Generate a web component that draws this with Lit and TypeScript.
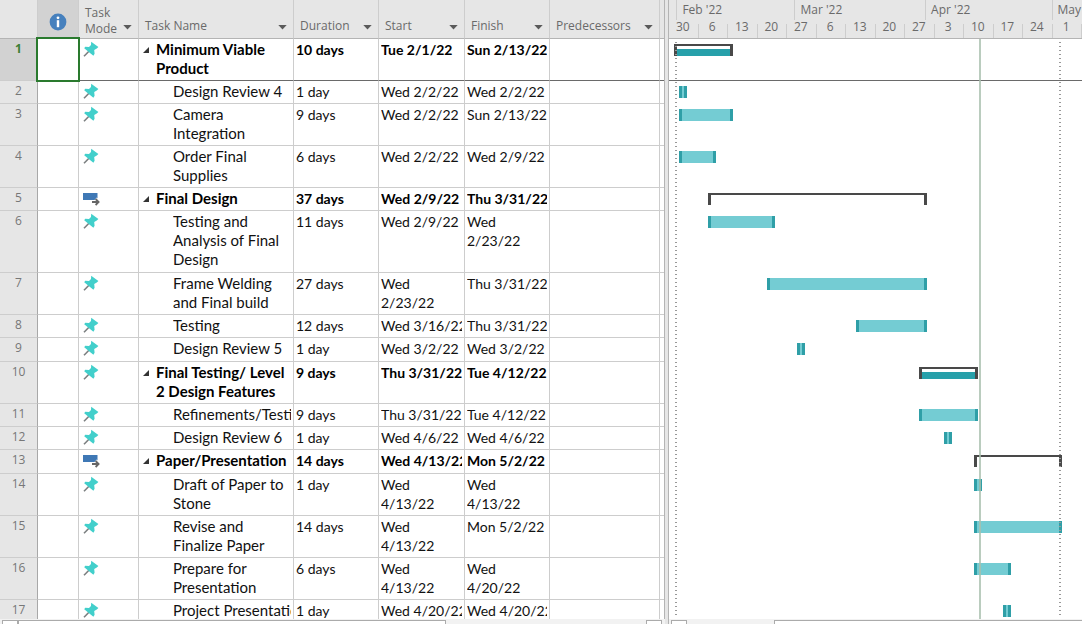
import { LitElement, html, css, svg } from "lit";
import { customElement } from "lit/decorators.js";
import { classMap } from "lit/directives/class-map.js";
import { styleMap } from "lit/directives/style-map.js";

interface Task {
  id: number;
  name: string;
  duration: string;
  start: string;
  finish: string;
  /** Day offsets from the first day of the timeline, end exclusive. */
  from: number;
  to: number;
  height: number;
  summary?: "manual" | "auto";
}

const DAYS = 98;
const TODAY = 74;
const PROJECT_START = 2;
const PROJECT_END = 93;

const TASKS: Task[] = [
  { id: 1, name: "Minimum Viable\nProduct", duration: "10 days", start: "Tue 2/1/22", finish: "Sun 2/13/22", from: 2, to: 15, height: 42, summary: "manual" },
  { id: 2, name: "Design Review 4", duration: "1 day", start: "Wed 2/2/22", finish: "Wed 2/2/22", from: 3, to: 4, height: 23 },
  { id: 3, name: "Camera\nIntegration", duration: "9 days", start: "Wed 2/2/22", finish: "Sun 2/13/22", from: 3, to: 15, height: 42 },
  { id: 4, name: "Order Final\nSupplies", duration: "6 days", start: "Wed 2/2/22", finish: "Wed 2/9/22", from: 3, to: 11, height: 42 },
  { id: 5, name: "Final Design", duration: "37 days", start: "Wed 2/9/22", finish: "Thu 3/31/22", from: 10, to: 61, height: 23, summary: "auto" },
  { id: 6, name: "Testing and\nAnalysis of Final\nDesign", duration: "11 days", start: "Wed 2/9/22", finish: "Wed\n2/23/22", from: 10, to: 25, height: 62 },
  { id: 7, name: "Frame Welding\nand Final build", duration: "27 days", start: "Wed\n2/23/22", finish: "Thu 3/31/22", from: 24, to: 61, height: 42 },
  { id: 8, name: "Testing", duration: "12 days", start: "Wed 3/16/22", finish: "Thu 3/31/22", from: 45, to: 61, height: 23 },
  { id: 9, name: "Design Review 5", duration: "1 day", start: "Wed 3/2/22", finish: "Wed 3/2/22", from: 31, to: 32, height: 24 },
  { id: 10, name: "Final Testing/ Level\n2 Design Features", duration: "9 days", start: "Thu 3/31/22", finish: "Tue 4/12/22", from: 60, to: 73, height: 42, summary: "manual" },
  { id: 11, name: "Refinements/Testing", duration: "9 days", start: "Thu 3/31/22", finish: "Tue 4/12/22", from: 60, to: 73, height: 23 },
  { id: 12, name: "Design Review 6", duration: "1 day", start: "Wed 4/6/22", finish: "Wed 4/6/22", from: 66, to: 67, height: 23 },
  { id: 13, name: "Paper/Presentation", duration: "14 days", start: "Wed 4/13/22", finish: "Mon 5/2/22", from: 73, to: 93, height: 24, summary: "auto" },
  { id: 14, name: "Draft of Paper to\nStone", duration: "1 day", start: "Wed\n4/13/22", finish: "Wed\n4/13/22", from: 73, to: 74, height: 42 },
  { id: 15, name: "Revise and\nFinalize Paper", duration: "14 days", start: "Wed\n4/13/22", finish: "Mon 5/2/22", from: 73, to: 93, height: 42 },
  { id: 16, name: "Prepare for\nPresentation", duration: "6 days", start: "Wed\n4/13/22", finish: "Wed\n4/20/22", from: 73, to: 81, height: 42 },
  { id: 17, name: "Project Presentation", duration: "1 day", start: "Wed 4/20/22", finish: "Wed 4/20/22", from: 80, to: 81, height: 23 },
];

const MONTHS = [
  { label: "Feb '22", day: 2 },
  { label: "Mar '22", day: 30 },
  { label: "Apr '22", day: 61 },
  { label: "May '22", day: 91 },
];

const WEEKS = [30, 6, 13, 20, 27, 6, 13, 20, 27, 3, 10, 17, 24, 1];

const percent = (day: number) => `${(day / DAYS) * 100}%`;

const pinIcon = html`<svg class="icon" width="16" height="16" viewBox="0 0 16 16" role="img" aria-label="Manually scheduled">
  ${svg`<path d="M1 15.2 L6.2 10" stroke="#7b7f80" stroke-width="1.6" fill="none"/>
  <path d="M8.2 0.8 L15.4 6 L13.8 7.4 L11.2 9 L11.6 12.8 L10.4 14.8 L7 12 L1.2 7.2 L2.2 5.8 L6 6 L8 4 Z" fill="#42cfcb"/>`}
</svg>`;

const autoIcon = html`<svg class="icon" width="18" height="16" viewBox="0 0 18 16" role="img" aria-label="Auto scheduled">
  ${svg`<rect x="0" y="3" width="14.5" height="7" fill="#3f78b5"/>
  <path d="M8 12 H15.5 M12.4 9 L15.6 12 L12.4 15" stroke="#fff" stroke-width="4" fill="none"/>
  <path d="M9 12 H15.5 M12.6 9 L15.6 12 L12.6 15" stroke="#666" stroke-width="1.8" fill="none"/>`}
</svg>`;

const infoIcon = html`<svg width="18" height="18" viewBox="0 0 18 18" role="img" aria-label="Indicators">
  ${svg`<circle cx="9" cy="9" r="8.4" fill="#4680bd"/>
  <circle cx="9" cy="4.8" r="1.4" fill="#fff"/>
  <rect x="7.8" y="7.2" width="2.4" height="7" fill="#fff"/>`}
</svg>`;

@customElement("task-sheet")
export class TaskSheet extends LitElement {
  static styles = css`
    :host {
      display: block;
      overflow: hidden;
      border-right: 1px solid #b4b4b4;
    }
    table {
      table-layout: fixed;
      width: 664px;
      border-collapse: separate;
      border-spacing: 0;
    }
    .c-id { width: 38px; }
    .c-info { width: 41px; }
    .c-mode { width: 60px; }
    .c-name { width: 155px; }
    .c-date { width: 85px; }
    .c-start { width: 86px; }
    .c-pred { width: 110px; }
    .c-end { width: 4px; }
    th, td {
      box-sizing: border-box;
      padding: 0;
      border-right: 1px solid #cdcdcd;
      border-bottom: 1px solid #cdcdcd;
      overflow: hidden;
      text-align: left;
      vertical-align: top;
      font-weight: 400;
    }
    th:last-child, td:last-child { border-right: 0; }
    thead th {
      height: 39px;
      background: #e6e6e6;
      border-bottom-color: #b4b4b4;
      color: #6a6a6a;
      font: 12px/16px "Open Sans", sans-serif;
      vertical-align: bottom;
    }
    thead .info {
      background: #d2d2d2;
      text-align: center;
      vertical-align: middle;
    }
    .info svg { display: block; margin: 5px auto 0; }
    .head {
      display: flex;
      align-items: flex-end;
      justify-content: space-between;
      padding: 0 6px 4px;
    }
    .mode .head { padding-bottom: 1px; }
    .filter {
      display: flex;
      padding: 4px 0;
      border: 0;
      background: none;
      color: #5a5a5a;
    }
    .mode .filter { padding-bottom: 7px; }
    tbody th {
      background: #e6e6e6;
      border-right-color: #a8a8a8;
      color: #777;
      font: 12px/19px "Open Sans", sans-serif;
      text-align: center;
    }
    td {
      padding: 1px 2px 0;
      color: #111;
      font: 14px/19px Lato, sans-serif;
      white-space: pre;
    }
    .clip { overflow: hidden; }
    .name { padding-left: 34px; font-size: 15px; }
    .summary td { font-weight: 700; color: #000; }
    .summary .name { padding-left: 4px; }
    .outline {
      display: flex;
      align-items: flex-start;
      gap: 7px;
    }
    .outline button {
      display: flex;
      padding: 7px 0 0;
      border: 0;
      background: none;
    }
    .icon { display: block; margin-left: 2px; }
    .mode { padding-top: 2px; }
    .selected th {
      background: #d2d2d2;
      color: #3b7f35;
      font-weight: 700;
    }
    .selected td { border-bottom-color: #6a6a6a; }
    .selected .active {
      position: relative;
      overflow: visible;
    }
    .active::after {
      content: "";
      position: absolute;
      inset: -2px -2px -2px;
      border: 2px solid #2a7a2e;
    }
  `;

  private header(label: string) {
    return html`<div class="head">
      <span>${label}</span>
      <button class="filter" aria-label="Filter ${label}">
        <svg width="9" height="5" viewBox="0 0 9 5">${svg`<path d="M0.3 0 H8.7 L4.5 4.6 Z" fill="currentColor"/>`}</svg>
      </button>
    </div>`;
  }

  private nameCell(task: Task) {
    if (!task.summary) return html`<td class="name"><div class="clip">${task.name}</div></td>`;
    return html`<td class="name"><div class="outline"><button aria-label="Collapse"><svg width="6" height="6" viewBox="0 0 6 6">${svg`<path d="M6 0 V6 H0 Z" fill="#333"/>`}</svg></button><span>${task.name}</span></div></td>`;
  }

  render() {
    return html`<table>
      <colgroup>
        <col class="c-id" /><col class="c-info" /><col class="c-mode" /><col class="c-name" />
        <col class="c-date" /><col class="c-start" /><col class="c-date" /><col class="c-pred" /><col class="c-end" />
      </colgroup>
      <thead>
        <tr>
          <th></th>
          <th class="info" scope="col">${infoIcon}</th>
          <th class="mode" scope="col">${this.header("Task Mode")}</th>
          ${["Task Name", "Duration", "Start", "Finish", "Predecessors"].map(
            (label) => html`<th scope="col">${this.header(label)}</th>`
          )}
          <th></th>
        </tr>
      </thead>
      <tbody>
        ${TASKS.map(
          (task) => html`<tr
            class=${classMap({ summary: !!task.summary, selected: task.id === 1 })}
            style=${styleMap({ height: `${task.height}px` })}
          >
            <th scope="row">${task.id}</th>
            <td class=${classMap({ active: task.id === 1 })}></td>
            <td class="mode">${task.summary === "auto" ? autoIcon : pinIcon}</td>
            ${this.nameCell(task)}
            ${[task.duration, task.start, task.finish].map(
              (text) => html`<td><div class="clip">${text}</div></td>`
            )}
            <td></td>
            <td></td>
          </tr>`
        )}
      </tbody>
    </table>`;
  }
}

@customElement("gantt-chart")
export class GanttChart extends LitElement {
  static styles = css`
    :host {
      display: flex;
      flex-direction: column;
      overflow: hidden;
      background: #fff;
    }
    .scale {
      box-sizing: border-box;
      height: 39px;
      flex: none;
      display: grid;
      grid-template-rows: 20px 18px;
      border-bottom: 1px solid #b4b4b4;
      background: #e6e6e6;
      color: #6a6a6a;
      font: 12px/18px "Open Sans", sans-serif;
    }
    .months { position: relative; }
    .month {
      position: absolute;
      top: 0;
      bottom: 0;
      margin-left: -1px;
      padding-left: 5px;
      border-left: 1px solid #cdcdcd;
      line-height: 20px;
      white-space: nowrap;
    }
    .weeks {
      display: grid;
      grid-template-columns: repeat(14, minmax(0, 1fr));
      align-items: end;
    }
    .week {
      height: 14px;
      padding-right: 1px;
      border-right: 1px solid #cdcdcd;
      line-height: 6px;
      text-align: center;
    }
    .canvas {
      position: relative;
      flex: 1;
      min-height: 0;
    }
    .row { position: relative; box-sizing: border-box; }
    .row.selected { border-bottom: 1px solid #6a6a6a; }
    .bar {
      position: absolute;
      box-sizing: border-box;
      top: 5px;
      height: 12px;
      margin-left: -3px;
      background: #74ccd3;
      border: solid #2f9fa7;
      border-width: 0 3px;
    }
    .bar.bracket {
      background: none;
      border-color: #494949;
      border-width: 2px 3px 0;
    }
    .bar.progress {
      background: linear-gradient(#fff 3px, #27a0aa 3px);
    }
    .line {
      position: absolute;
      top: 0;
      bottom: 0;
      width: 2px;
    }
    .today { margin-left: -2px; background: #a9bfae; opacity: 0.8; }
    .limit {
      top: 3px;
      bottom: 1px;
      margin-left: -2px;
      background: repeating-linear-gradient(#999 0 1px, transparent 1px 4px);
    }
  `;

  render() {
    return html`
      <div class="scale">
        <div class="months">
          ${MONTHS.map((m) => html`<span class="month" style=${styleMap({ left: percent(m.day) })}>${m.label}</span>`)}
        </div>
        <div class="weeks">${WEEKS.map((w) => html`<span class="week">${w}</span>`)}</div>
      </div>
      <div class="canvas">
        ${TASKS.map(
          (task) => html`<div
            class=${classMap({ row: true, selected: task.id === 1 })}
            style=${styleMap({ height: `${task.height}px` })}
          >
            <div
              class=${classMap({ bar: true, bracket: !!task.summary, progress: task.summary === "manual" })}
              style=${styleMap({
                left: percent(task.from),
                width: `calc(${percent(task.to - task.from)} + 4px)`,
              })}
            ></div>
          </div>`
        )}
        <div class="line today" style=${styleMap({ left: percent(TODAY) })}></div>
        ${[PROJECT_START, PROJECT_END].map(
          (day) => html`<div class="line limit" style=${styleMap({ left: percent(day) })}></div>`
        )}
      </div>
    `;
  }
}

@customElement("app-root")
export class AppRoot extends LitElement {
  static styles = css`
    :host {
      display: grid;
      grid-template-columns: 665px 4px minmax(0, 1fr);
      grid-template-rows: minmax(0, 1fr) 5px;
      height: 100vh;
      overflow: hidden;
      background: #fff;
    }
    .splitter {
      box-sizing: border-box;
      grid-row: 1 / 3;
      grid-column: 2;
      border-right: 1px solid #b4b4b4;
      background: #e6e6e6;
    }
    task-sheet { grid-area: 1 / 1; }
    gantt-chart { grid-area: 1 / 3; }
    .scroll {
      display: flex;
      height: 17px;
      background: #f2f2f2;
    }
    .left { grid-area: 2 / 1; padding: 0 3px 0 2px; }
    .right { grid-area: 2 / 3; padding-left: 2px; }
    .scroll button {
      box-sizing: border-box;
      flex: none;
      width: 16px;
      padding: 0;
      margin-top: 1px;
      border: 1px solid #ababab;
      background: #fff;
    }
    .scroll .thumb { flex: 68 1 0; }
    .track { flex: 32 1 0; }
    .right .track { flex: 22 1 0; }
    .right .thumb { flex: 78 1 0; border-right: 0; }
  `;

  render() {
    return html`
      <task-sheet></task-sheet>
      <div class="splitter"></div>
      <gantt-chart></gantt-chart>
      <div class="scroll left">
        <button aria-label="Scroll left"></button>
        <button class="thumb" aria-label="Scroll sheet"></button>
        <div class="track"></div>
        <button aria-label="Scroll right"></button>
      </div>
      <div class="scroll right">
        <button aria-label="Scroll left"></button>
        <div class="track"></div>
        <button class="thumb" aria-label="Scroll chart"></button>
      </div>
    `;
  }
}
